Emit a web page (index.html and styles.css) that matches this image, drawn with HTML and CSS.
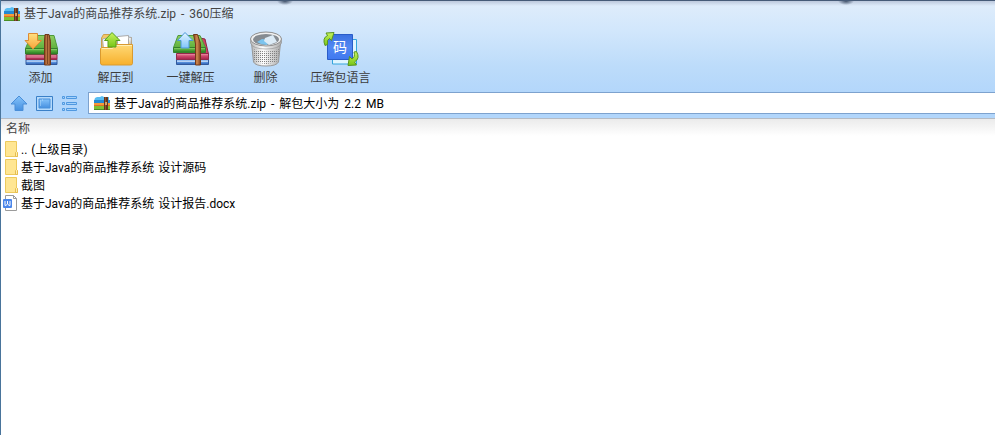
FILE: index.html
```html
<!DOCTYPE html>
<html lang="zh-CN">
<head>
  <meta charset="UTF-8" />
  <meta name="viewport" content="width=device-width, initial-scale=1.0" />
  <title>基于Java的商品推荐系统.zip - 360压缩</title>
  <link rel="stylesheet" href="styles.css">
</head>
<body>
  <!-- shared gradients and symbols -->
  <svg class="defs" width="0" height="0">
    <defs>
      <linearGradient id="green" x1="0" y1="0" x2="0" y2="1"><stop offset="0" stop-color="#8fcf62" /><stop offset="1" stop-color="#5fb03c" /></linearGradient>
      <linearGradient id="lip" x1="0" y1="0" x2="0" y2="1"><stop offset="0" stop-color="#b5e58c" /><stop offset=".3" stop-color="#5fb544" /><stop offset="1" stop-color="#23791e" /></linearGradient>
      <linearGradient id="red" x1="0" y1="0" x2="0" y2="1"><stop offset="0" stop-color="#f0a0b3" /><stop offset=".4" stop-color="#d04a70" /><stop offset="1" stop-color="#a3204a" /></linearGradient>
      <linearGradient id="blue" x1="0" y1="0" x2="0" y2="1"><stop offset="0" stop-color="#b5d6fb" /><stop offset=".5" stop-color="#5f97e2" /><stop offset="1" stop-color="#2a5cae" /></linearGradient>
      <linearGradient id="strap" x1="0" y1="0" x2="1" y2="0"><stop offset="0" stop-color="#8a4820" /><stop offset=".5" stop-color="#cf8850" /><stop offset="1" stop-color="#80401c" /></linearGradient>
      <linearGradient id="orange" x1="0" y1="0" x2="0" y2="1"><stop offset="0" stop-color="#ffe080" /><stop offset="1" stop-color="#f9a53a" /></linearGradient>
      <linearGradient id="folder" x1="0" y1="0" x2="0" y2="1"><stop offset="0" stop-color="#ffd976" /><stop offset="1" stop-color="#f7b02c" /></linearGradient>
      <linearGradient id="sky" x1="0" y1="0" x2="0" y2="1"><stop offset="0" stop-color="#e2f4ff" /><stop offset="1" stop-color="#80c5fb" /></linearGradient>
      <linearGradient id="lime" x1="0" y1="0" x2="0" y2="1"><stop offset="0" stop-color="#c8f35e" /><stop offset="1" stop-color="#76c616" /></linearGradient>
      <linearGradient id="tile" x1="0" y1="0" x2="0" y2="1"><stop offset="0" stop-color="#3a70e0" /><stop offset=".5" stop-color="#5288f2" /><stop offset="1" stop-color="#3f78f0" /></linearGradient>
      <linearGradient id="nav" x1="0" y1="0" x2="0" y2="1"><stop offset="0" stop-color="#85c3fb" /><stop offset="1" stop-color="#4690e0" /></linearGradient>
      <linearGradient id="metal" x1="0" y1="0" x2="1" y2="0"><stop offset="0" stop-color="#b5b5b5" /><stop offset=".4" stop-color="#fff" /><stop offset="1" stop-color="#aaa" /></linearGradient>
      <pattern id="mesh" width="2" height="2" patternUnits="userSpaceOnUse"><path d="M0 0h1v1H0z" fill="#808080" /></pattern>
    </defs>
    <symbol id="zip" viewBox="0 0 16 14">
      <path d="M1 2l2-1h3l2-1 2 1h5v4H0z" fill="#58bdf2" />
      <path d="M0 4h16v3H0z" fill="#2589d3" />
      <path d="M0 7h16v3H0z" fill="#f79a3a" />
      <path d="M0 9h16v1H0z" fill="#dc7126" />
      <path d="M0 10h16v4H0z" fill="#7fc034" />
      <path d="M0 13h16v1H0z" fill="#4b8f25" />
      <path d="M10 1h4v13h-4z" fill="#65341d" />
      <path d="M11 1h1v13h-1z" fill="#8d5430" />
      <path d="M11 6h2v3h-2z" fill="#d5a06a" />
    </symbol>
    <symbol id="folder-small" viewBox="0 0 16 16">
      <path d="M2.500.5h11v10l1 1v4h-12z" fill="#ffe692" stroke="#edca5c" />
      <path d="M12.500 15.500v-4l1-1 1 1v4z" fill="#fff0ae" stroke="#e6bd50" />
    </symbol>
  </svg>

  <div class="window">
    <header class="top">
      <div class="titlebar">
        <svg class="zip-icon"><use href="#zip" /></svg>
        <span class="title">基于Java的商品推荐系统.zip - 360压缩</span>
      </div>

      <div class="toolbar">
        <div class="tool">
          <svg viewBox="0 0 36 36">
            <path d="M3 28.500h31v5H3z" fill="url(#blue)" stroke="#31589c" />
            <path d="M3 23.500h31v5H3z" fill="url(#red)" stroke="#93284a" />
            <path d="M8 4.500h23l3.500 13H2.500z" fill="url(#green)" stroke="#4e9a3b" />
            <path d="M2.500 17.500h32v5.500h-32z" fill="url(#lip)" stroke="#36812c" />
            <path d="M3.500 26h30M3.500 30.500h30" stroke="#fff" stroke-opacity=".4" />
            <path d="M22 3.500h4l1.500 7v23.500h-6V10z" fill="url(#strap)" stroke="#70381a" />
            <path d="M24.500 4v29" stroke="#6c3417" stroke-width=".8" />
            <path d="M5.500 2.500h9v7h4l-8.500 8.500L2 9.500h3.500z" fill="url(#orange)" stroke="#dd8a34" />
          </svg>
          <span>添加</span>
        </div>
        <div class="tool">
          <svg viewBox="0 0 36 36">
            <path d="M3.500 7l2-3.500h6l3 3h19V32h-30z" fill="#f3c668" stroke="#cda04b" />
            <path d="M4.500 8l10-2 3 12h-12z" fill="#fff" stroke="#aaa" />
            <path d="M19.500 5.500l11-1v13h-11z" fill="#fff" stroke="#aaa" />
            <path d="M30.500 6l3 .5-1 10" fill="#eee" stroke="#aaa" />
            <path d="M2.500 17.500l1-1h10.500l3-3h17.500v19q0 1.500-2 1.500h-28q-2 0-2-2z" fill="url(#folder)" stroke="#d99a30" />
            <path d="M4 17.500h10.500l3-3H34" fill="none" stroke="#ffefb5" />
            <path d="M14 1.500l8 8h-4v6.500h-8V9.500H6.500z" fill="url(#lime)" stroke="#56a01e" />
          </svg>
          <span>解压到</span>
        </div>
        <div class="tool">
          <svg viewBox="0 0 36 36">
            <path d="M27 7l5 1 3.500 15v5H28z" fill="#cf4167" stroke="#8d2842" />
            <path d="M3.500 28.500h32v5h-32z" fill="url(#blue)" stroke="#31589c" />
            <path d="M3.500 22.500h32v6h-32z" fill="url(#red)" stroke="#93284a" />
            <path d="M4 30.500h31" stroke="#fff" stroke-opacity=".5" />
            <path d="M5 4.500h22l5.500 12H.5z" fill="url(#green)" stroke="#4e9a3b" />
            <path d="M.5 16.500h32v5H.5z" fill="url(#lip)" stroke="#36812c" />
            <path d="M20.500 3.500h4l3 9v21.500h-5V13z" fill="url(#strap)" stroke="#70381a" />
            <path d="M12 1.500l8 8h-4V17H8V9.500H4.500z" fill="url(#sky)" stroke="#4a98d8" />
          </svg>
          <span>一键解压</span>
        </div>
        <div class="tool">
          <svg viewBox="0 0 36 36">
            <path d="M3.500 12l2 19q2 4 12.500 4t12.500-4l2-19z" fill="url(#metal)" stroke="#999" />
            <path d="M5 18l1 12q12 6 24 0l1-12q-13 5-26 0z" fill="url(#mesh)" />
            <path d="M2.500 8v4q2 6 15.500 6t15.500-6V8z" fill="url(#metal)" stroke="#8e8e8e" stroke-width=".6" />
            <ellipse cx="18" cy="8" rx="15.500" ry="7" fill="#f0f0f0" stroke="#8e8e8e" />
            <ellipse cx="18" cy="8.500" rx="13" ry="5.500" fill="#858b91" />
            <path d="M9 11l5-3 8 1-3 5-6-1z" fill="#7cc4ee" />
            <path d="M17 7l8-3 4 7-8 3-5-4z" fill="#dcebf6" />
          </svg>
          <span>删除</span>
        </div>
        <div class="tool">
          <svg viewBox="0 0 36 36">
            <path d="M9.500 8.500h24v24.500h-24z" fill="#dff5ff" stroke="#35a5dc" />
            <path d="M4.500 3.500h25v25h-25z" fill="url(#tile)" stroke="#2a5cc8" />
            <text x="17" y="21" class="tile-text">码</text>
            <path d="M2 14.500Q-1 7 4.500 4.500L3 2l8-.5-2.500 8L6.500 7.500q-3 1-2 6z" fill="url(#lime)" stroke="#5a9420" />
            <path d="M33.500 20.500q4 7-2 10.500l2 3-8.500.500 1.500-9 2.500 2.500q3.500-2 2-7z" fill="url(#lime)" stroke="#5a9420" />
          </svg>
          <span>压缩包语言</span>
        </div>
      </div>

      <div class="navbar">
        <svg class="nav-icon" viewBox="0 0 18 18"><path d="M9 2l8 8h-4v6.500H5V10H1z" fill="url(#nav)" stroke="#4a8ed8" /></svg>
        <svg class="nav-icon" viewBox="0 0 18 18">
          <path d="M1.500 2.500h16v14h-16z" fill="#b5dafc" stroke="#3a80c8" />
          <path d="M4 5h11v9H4z" fill="url(#nav)" stroke="#4a90da" />
          <path d="M5 7h1M5 9h1M5 11h1M7 6h1" stroke="#b9dffc" />
        </svg>
        <svg class="nav-icon" viewBox="0 0 18 18">
          <path d="M2.500 2.500h2v2h-2zM6.500 2.500h10v2h-10zM2.500 8.500h2v2h-2zM6.500 8.500h10v2h-10zM2.500 14.500h2v2h-2zM6.500 14.500h10v2h-10z" fill="#a4d1fb" stroke="#4f98e0" />
        </svg>
        <div class="address">
          <svg class="zip-icon"><use href="#zip" /></svg>
          <span>基于Java的商品推荐系统.zip - 解包大小为 2.2 MB</span>
        </div>
      </div>
    </header>

    <main>
      <div class="column-head">名称</div>
      <ul class="files">
        <li><svg><use href="#folder-small" /></svg><span>.. (上级目录)</span></li>
        <li><svg><use href="#folder-small" /></svg><span>基于Java的商品推荐系统 设计源码</span></li>
        <li><svg><use href="#folder-small" /></svg><span>截图</span></li>
        <li>
          <svg viewBox="0 0 16 16">
            <path d="M2.500.5h8l3 3v12h-11z" fill="#fff" stroke="#9b9b9b" />
            <path d="M10.500.5v3h3" fill="none" stroke="#9b9b9b" />
            <rect x="0" y="4" width="9" height="9" rx="1" fill="#4a86ea" />
            <path d="M2 6v4.500h.8l1.700-1.500 1.700 1.500H7V6M4.500 6v3" fill="none" stroke="#fff" />
          </svg>
          <span>基于Java的商品推荐系统 设计报告.docx</span>
        </li>
      </ul>
    </main>
  </div>
</body>
</html>
```
FILE: styles.css
```css
* {
  box-sizing: border-box;
}

body {
  margin: 0;
  font-family: Roboto, "Noto Sans CJK SC", sans-serif;
  font-size: 12px;
  line-height: 18px;
  color: #000;
  background: #fff;
  overflow: hidden;
}

svg {
  display: block;
  flex-shrink: 0;
}

.defs {
  position: absolute;
}

.window {
  height: 435px;
  border-left: 1px solid #49749b;
}

.top {
  height: 119px;
  border-top: 1px solid #465b78;
  border-bottom: 1px solid #b5bbc4;
  background:
    radial-gradient(ellipse 8px 4px at 284px 0, #40516a, transparent),
    radial-gradient(ellipse 8px 4px at 845px 0, #40516a, transparent),
    linear-gradient(#bcc8dc, rgba(205, 220, 240, 0) 5px),
    linear-gradient(#e0edfb, #d2e7fc 25%, #bddcfa 55%, #b2d6fb 80%, #b2d6fb);
}

.titlebar {
  display: flex;
  align-items: center;
  height: 26px;
  padding-left: 3px;
  gap: 4px;
  color: #444;
  word-spacing: 2px;
}

.zip-icon {
  width: 16px;
  height: 14px;
}

.toolbar {
  display: flex;
  height: 64px;
  padding: 4px 0 0 2px;
  color: #3c3c3c;
}

.tool {
  display: flex;
  flex-direction: column;
  align-items: center;
  width: 75px;
  white-space: nowrap;
}

.tool svg {
  width: 36px;
  height: 36px;
  margin-bottom: 2px;
}

.tile-text {
  font-size: 14px;
  fill: #fff;
  text-anchor: middle;
}

.navbar {
  display: flex;
  align-items: center;
  height: 24px;
  padding-left: 9px;
  gap: 7px;
}

.nav-icon {
  width: 18px;
  height: 18px;
}

.address {
  display: flex;
  flex: 1;
  align-items: center;
  height: 22px;
  margin-left: 3px;
  padding-left: 5px;
  gap: 4px;
  border: 1px solid #7da2ce;
  border-right: 0;
  background: #fff;
  word-spacing: 2px;
}

.address span {
  padding-top: 1px;
}

.column-head {
  height: 21px;
  padding: 1px 0 0 5px;
  color: #444;
  background: linear-gradient(#ebebeb, #fff 17px);
}

.files {
  margin: 0;
  padding: 0;
  list-style: none;
}

.files li {
  display: flex;
  align-items: center;
  height: 18px;
  padding-left: 2px;
  gap: 2px;
  word-spacing: 1px;
}

.files svg {
  width: 16px;
  height: 16px;
}

.files span {
  padding-top: 1px;
}
```
